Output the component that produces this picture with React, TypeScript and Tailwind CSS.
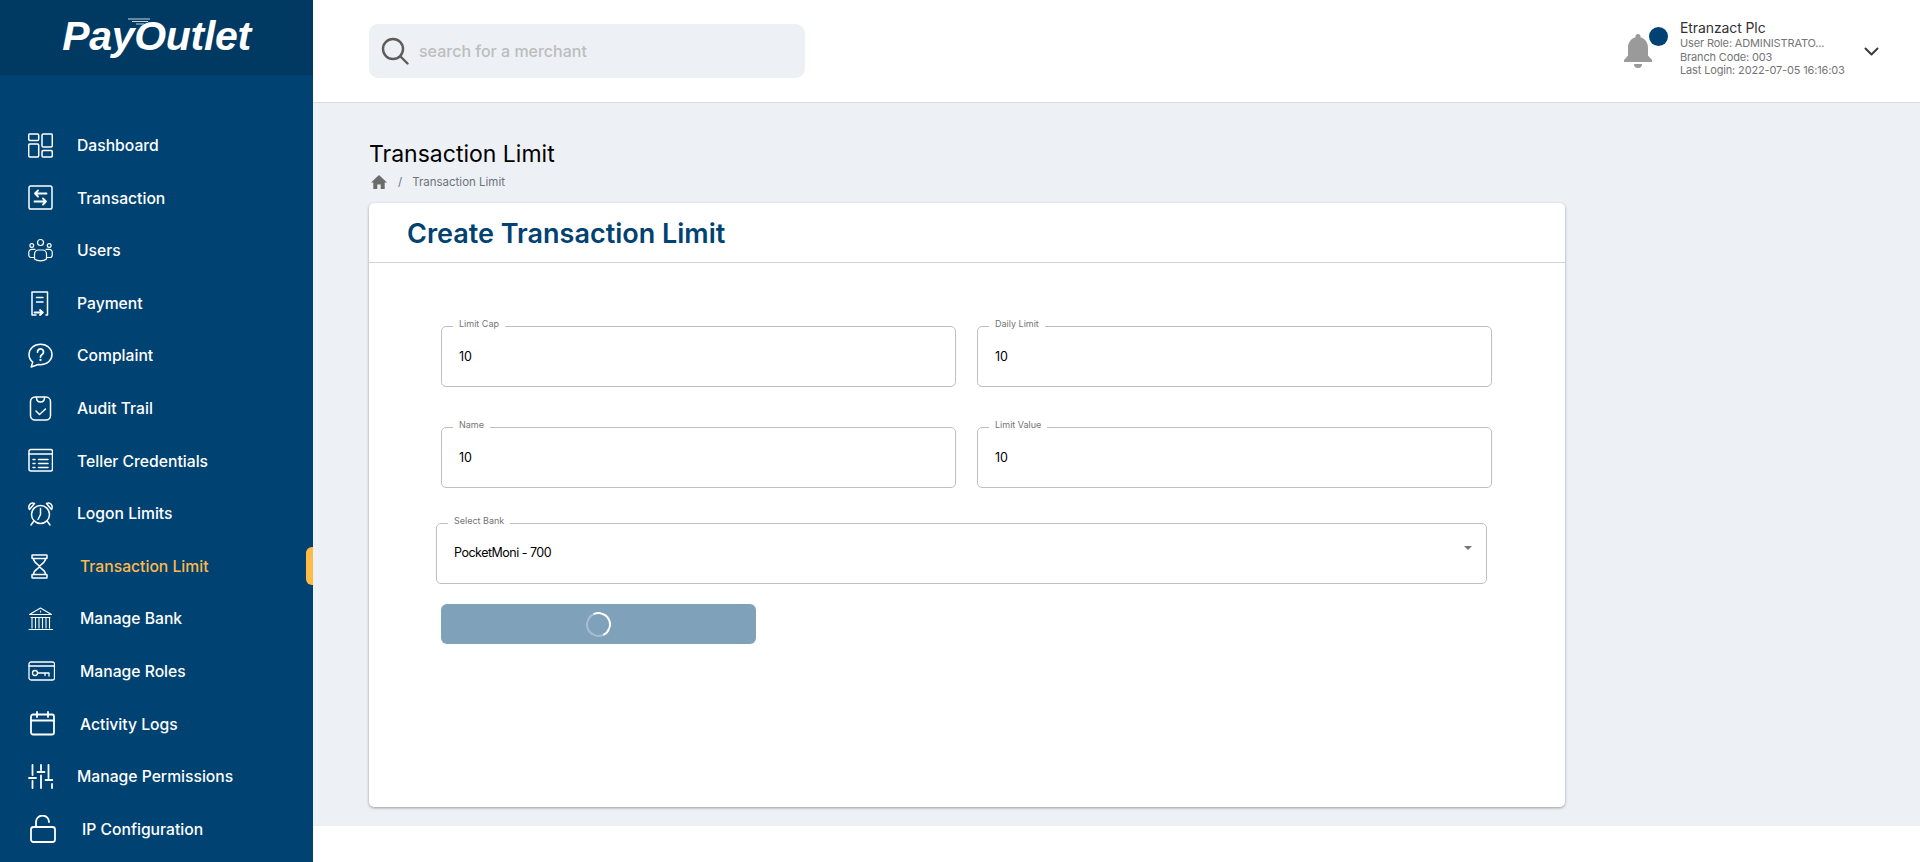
import type { ReactNode } from "react";

const S = ({ children, vb = "0 0 25 25", w = 25, h = 25, sw = 1.5 }: { children: ReactNode; vb?: string; w?: number; h?: number; sw?: number }) => (
    <svg width={w} height={h} viewBox={vb} fill="none" stroke="currentColor" strokeWidth={sw} strokeLinecap="round" strokeLinejoin="round">
        {children}
    </svg>
);

const icons: Record<string, ReactNode> = {
    dashboard: (
        <S>
            <rect x="0.7" y="1" width="10" height="6.5" rx="1.2" />
            <rect x="14" y="1" width="10.3" height="13" rx="1.2" />
            <rect x="0.7" y="11" width="10" height="13" rx="1.2" />
            <rect x="14" y="17.5" width="10.3" height="6.5" rx="1.2" />
        </S>
    ),
    transaction: (
        <S>
            <rect x="1" y="1" width="23" height="23" rx="1.8" />
            <path d="M18.5 8.5H7M10 5.5 7 8.5l3 3M6.5 16.5H18M15 13.5l3 3-3 3" strokeWidth="1.8" />
        </S>
    ),
    users: (
        <S sw={1.2}>
            <circle cx="12.5" cy="4.5" r="3" />
            <circle cx="3.8" cy="7.5" r="1.9" />
            <circle cx="21.2" cy="7.5" r="1.9" />
            <path d="M6.500 21v-5a4 4 0 0 1 4-4h4a4 4 0 0 1 4 4v5c-3 2.500-9 2.500-12 0Z" />
            <path d="M6.500 19.500H3a2.200 2.200 0 0 1-2.200-2.200v-3a3 3 0 0 1 3-3H7M18.500 19.500H22a2.200 2.200 0 0 0 2.200-2.200v-3a3 3 0 0 0-3-3H18" />
        </S>
    ),
    payment: (
        <S>
            <path d="M8 24H4V1h15.500v23H18" />
            <path d="M8.500 6.500h6.500M8.500 11h6.500" />
            <path d="M6.500 21.500h8M12 19l2.800 2.500L12 24" strokeWidth="1.800" />
        </S>
    ),
    complaint: (
        <S>
            <path d="M12.500 1.200C6 1.200 1 5.800 1 11.500c0 3 1.400 5.700 3.700 7.600L3.200 24l7-2.500c.8.100 1.500.2 2.300.2 6.500 0 11.500-4.500 11.500-10.200S19 1.200 12.500 1.200Z" />
            <path d="M9.500 9a3 3 0 1 1 4.600 2.500c-1 .7-1.600 1.200-1.600 2.500" strokeWidth="1.800" />
            <circle cx="12.500" cy="17" r="0.400" />
        </S>
    ),
    audit: (
        <S>
            <rect x="2.500" y="1" width="20" height="23" rx="4.500" />
            <path d="M8.500 1.500c0 6 8 6 8 0M8 15l3.500 3.500L17.500 13" />
        </S>
    ),
    teller: (
        <S>
            <rect x="1" y="1.500" width="23.500" height="21.500" rx="2" />
            <path d="M1 6h23.500M5 11.500h2M10.500 11.500h9.500M5 15.500h2M10.500 15.500h9.500M5 19.500h2M10.500 19.500h9.500" />
        </S>
    ),
    logon: (
        <S>
            <circle cx="12.500" cy="13.500" r="9" />
            <path d="M12.500 7.500v6l-2.500 5M5.500 20.500 3 24M19.500 20.500 22 24" />
            <path d="M1.500 8.500C-.5 5 2.500.5 6.500 2.500ZM23.500 8.500c2-3.500-1-8-5-6Z" />
        </S>
    ),
    hourglass: (
        <S>
            <rect x="4" y="1" width="15" height="3.500" rx="0.500" />
            <rect x="4" y="20.500" width="15" height="3.500" rx="0.500" />
            <path d="M5.500 4.500c0 5 6 6 6 8s-6 3-6 8M17.500 4.500c0 5-6 6-6 8s6 3 6 8" />
        </S>
    ),
    bank: (
        <S sw={1.100}>
            <path d="M1.500 8.500 12.500 2l11 6.500M1.500 8.500h22M3 11.500h19M12.500 5v1" />
            <path d="M4 11.500v10.500M7.500 11.500v10.500M11 11.500v10.500M14.500 11.500v10.500M18 11.500v10.500M21.500 11.500v10.500M1 23.500h24" />
        </S>
    ),
    roles: (
        <S w={27} h={20} vb="0 0 27 20" sw={1.300}>
            <rect x="1" y="1" width="25.500" height="18" rx="2" />
            <path d="M1 5h25.500" />
            <circle cx="7" cy="12" r="2.500" />
            <path d="M9.500 12H21v3M17 12v2.500" />
        </S>
    ),
    calendar: (
        <S sw={1.800}>
            <rect x="1" y="3.500" width="23" height="20" rx="2" />
            <path d="M1 9.500h23M7 1v5M18 1v5" />
        </S>
    ),
    sliders: (
        <S sw={1.800}>
            <path d="M4.500 1v10M4.500 17v7M1 14h7M13 1v5M9.500 8h7M13 11.500V24M20.500 1v13M17.500 16h7M24 20v4" />
        </S>
    ),
    unlock: (
        <S w={26} h={28} vb="0 0 26 28" sw={1.800}>
            <rect x="1" y="12" width="24" height="15" rx="2.500" />
            <path d="M6 12V7a6.500 6.500 0 0 1 13 0" />
        </S>
    ),
};

const nav = [
    { label: "Dashboard", icon: "dashboard", iconCls: "w-[25px]", textCls: "ml-[24px]" },
    { label: "Transaction", icon: "transaction", iconCls: "w-[25px]", textCls: "ml-[24px]" },
    { label: "Users", icon: "users", iconCls: "w-[25px]", textCls: "ml-[24px]" },
    { label: "Payment", icon: "payment", iconCls: "w-[25px]", textCls: "ml-[24px]" },
    { label: "Complaint", icon: "complaint", iconCls: "w-[25px]", textCls: "ml-[24px]" },
    { label: "Audit Trail", icon: "audit", iconCls: "w-[25px]", textCls: "ml-[24px]" },
    { label: "Teller Credentials", icon: "teller", iconCls: "w-[25px]", textCls: "ml-[24px]" },
    { label: "Logon Limits", icon: "logon", iconCls: "w-[25px]", textCls: "ml-[24px]" },
    { label: "Transaction Limit", icon: "hourglass", iconCls: "w-[25px]", textCls: "ml-[27px] text-[#ffb949]", active: true },
    { label: "Manage Bank", icon: "bank", iconCls: "w-[25px]", textCls: "ml-[27px]" },
    { label: "Manage Roles", icon: "roles", iconCls: "w-[27px]", textCls: "ml-[25px]" },
    { label: "Activity Logs", icon: "calendar", iconCls: "w-[25px] ml-[2px]", textCls: "ml-[25px]" },
    { label: "Manage Permissions", icon: "sliders", iconCls: "w-[25px]", textCls: "ml-[24px]" },
    { label: "IP Configuration", icon: "unlock", iconCls: "w-[26px] ml-[2px]", textCls: "ml-[26px]" },
];

function Sidebar() {
    return (
        <aside className="w-[313px] shrink-0 bg-[#004272] text-white">
            <div className="relative flex h-[75px] items-center justify-center bg-[#003a63]">
                <span className="font-['Liberation_Sans'] text-[41px] font-bold italic tracking-[-0.3px] leading-none -mt-[3px]">
                    PayOutlet
                </span>
                <svg className="absolute left-[128px] top-[17px]" width="36" height="12" viewBox="0 0 36 12" fill="none" stroke="#c9d6e0" strokeWidth="1.200">
                    <path d="M0 2h22M4 4.500h16M8 7h8" />
                </svg>
            </div>
            <nav className="pt-[44px]">
                {nav.map((item) => (
                    <div key={item.label} className="relative flex h-[52.6px] items-center pl-[28px] text-[15.7px] font-medium">
                        <span className={`flex h-[28px] shrink-0 items-center justify-center ${item.iconCls}`}>{icons[item.icon]}</span>
                        <span className={`pt-[1px] ${item.textCls}`}>{item.label}</span>
                        {item.active && <span className="absolute right-0 top-[7px] h-[38px] w-[7px] rounded-l-[6px] bg-[#ffbb45]" />}
                    </div>
                ))}
            </nav>
        </aside>
    );
}

function TopBar() {
    return (
        <header className="flex h-[103px] items-center justify-between border-b border-[#dcdcdc] bg-white pl-[56px] pr-[41px]">
            <div className="flex h-[54px] w-[436px] items-center gap-[10px] rounded-[9px] bg-[#edf0f5] pl-[12px]">
                <svg width="28" height="28" viewBox="0 0 28 28" fill="none" stroke="#5c5c5c" strokeWidth="2.400" strokeLinecap="round">
                    <circle cx="12" cy="12" r="10" />
                    <path d="M19.500 19.500 26.500 26.500" />
                </svg>
                <span className="text-[16px] font-medium text-[#bdbdbd]">search for a merchant</span>
            </div>
            <div className="flex items-center">
                <div className="relative mr-[27px] h-[36px] w-[30px]">
                    <svg width="30" height="36" viewBox="0 0 30 36" fill="#9a9a9a">
                        <path d="M15 1a2.500 2.500 0 0 1 2.500 2.500v.8C22.500 5.600 25 10 25 15v7.500l4 4.500v2H1v-2l4-4.500V15c0-5 2.500-9.400 7.500-10.700v-.8A2.500 2.500 0 0 1 15 1Z" />
                        <path d="M11 31h8a4 4 0 0 1-8 0Z" />
                    </svg>
                    <span className="absolute left-[26px] top-[-6px] h-[19px] w-[19px] rounded-full bg-[#004272]" />
                </div>
                <div className="w-[182px] whitespace-nowrap pb-[5px] text-[11px] leading-[13.5px] tracking-[-0.15px] text-[#757575]">
                    <div className="text-[14px] leading-[18px] tracking-[-0.1px] text-[#333]">Etranzact Plc</div>
                    <div>User Role: ADMINISTRATO...</div>
                    <div>Branch Code: 003</div>
                    <div>Last Login: 2022-07-05 16:16:03</div>
                </div>
                <svg className="ml-[2px]" width="15" height="9" viewBox="0 0 15 9" fill="none" stroke="#3c3c3c" strokeWidth="2" strokeLinecap="round" strokeLinejoin="round">
                    <path d="M1.500 1.500 7.500 7.500 13.500 1.500" />
                </svg>
            </div>
        </header>
    );
}

function Field({ label, value, className = "", valueCls = "pt-[16px]" }: { label: string; value: string; className?: string; valueCls?: string }) {
    return (
        <fieldset className={`h-[67px] rounded-[5px] border border-[#bfbfbf] pl-[11px] pr-[17px] ${className}`}>
            <legend className="px-[6px] text-[9px] leading-[12px] text-[#757575]">
                <span className="block -translate-y-[2px]">{label}</span>
            </legend>
            <div className={`pl-[6px] text-[12.5px] leading-[18px] tracking-[-0.2px] text-black ${valueCls}`}>{value}</div>
        </fieldset>
    );
}

function Card() {
    return (
        <section className="h-[604px] w-[1196px] rounded-[5px] bg-white shadow-[0_1px_3px_rgba(0,0,0,0.35)]">
            <div className="h-[60px] border-b border-[#d3d3d3] pl-[38px] pt-[12px] text-[27px] font-semibold leading-[38px] text-[#004272]">
                Create Transaction Limit
            </div>
            <div className="pl-[72px] pt-[57px]">
                <div className="grid w-[1051px] grid-cols-[515px_515px] gap-x-[21px] gap-y-[34px]">
                    <Field label="Limit Cap" value="10" />
                    <Field label="Daily Limit" value="10" />
                    <Field label="Name" value="10" />
                    <Field label="Limit Value" value="10" />
                </div>
                <div className="relative mt-[29px] -ml-[5px] w-[1051px]">
                    <Field label="Select Bank" value="PocketMoni - 700" className="w-full" valueCls="pt-[15px] tracking-[-0.5px]" />
                    <span className="absolute right-[15px] top-[29px] h-0 w-0 border-x-[4px] border-t-[4px] border-x-transparent border-t-[#757575]" />
                </div>
                <button className="mt-[20px] flex h-[40px] w-[315px] items-center justify-center rounded-[6px] bg-[#80a1ba]">
                    <span className="h-[25px] w-[25px] rotate-[20deg] rounded-full border-2 border-t-white border-r-white border-b-white/30 border-l-white/30" />
                </button>
            </div>
        </section>
    );
}

export default function App() {
    return (
        <div className="flex h-[862px] overflow-hidden bg-white font-['Inter',sans-serif]">
            <Sidebar />
            <main className="min-w-0 flex-1">
                <TopBar />
                <div className="h-[723px] bg-[#edf0f5] pl-[56px] pt-[36px]">
                    <h1 className="text-[23px] leading-[30px] text-black">Transaction Limit</h1>
                    <div className="mb-[10px] mt-[4px] flex h-[20px] items-center text-[11.5px] text-[#6f7479]">
                        <svg className="mb-[3px] ml-[2px]" width="16" height="14" viewBox="0 0 16 14" fill="#6b6b6b">
                            <path d="M8 0 0 7.500h2.300V14h4v-4.500h3.400V14h4V7.500H16Z" />
                        </svg>
                        <span className="ml-[11px]">/</span>
                        <span className="ml-[10px]">Transaction Limit</span>
                    </div>
                    <Card />
                </div>
            </main>
        </div>
    );
}
